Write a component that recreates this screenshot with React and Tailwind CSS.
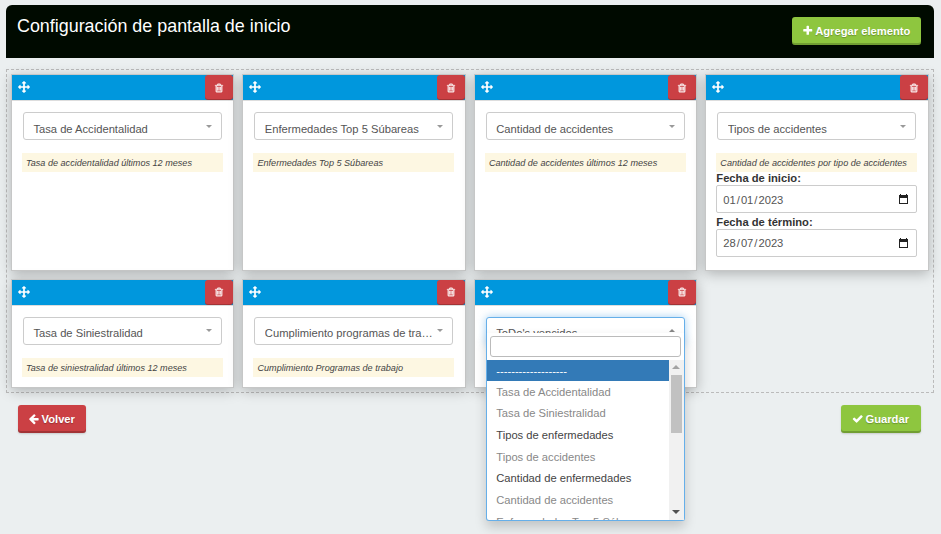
const PATHS = {
  move: 'M1792 896q0 26-19 45l-256 256q-19 19-45 19t-45-19-19-45v-128h-384v384h128q26 0 45 19t19 45-19 45l-256 256q-19 19-45 19t-45-19l-256-256q-19-19-19-45t19-45 45-19h128v-384h-384v128q0 26-19 45t-45 19-45-19l-256-256q-19-19-19-45t19-45l256-256q19-19 45-19t45 19 19 45v128h384v-384h-128q-26 0-45-19t-19-45 19-45l256-256q19-19 45-19t45 19l256 256q19 19 19 45t-19 45-45 19h-128v384h384v-128q0-26 19-45t45-19 45 19l256 256q19 19 19 45z',
  trash: 'M704 736v576q0 14-9 23t-23 9h-64q-14 0-23-9t-9-23v-576q0-14 9-23t23-9h64q14 0 23 9t9 23zm256 0v576q0 14-9 23t-23 9h-64q-14 0-23-9t-9-23v-576q0-14 9-23t23-9h64q14 0 23 9t9 23zm256 0v576q0 14-9 23t-23 9h-64q-14 0-23-9t-9-23v-576q0-14 9-23t23-9h64q14 0 23 9t9 23zm128 724v-948h-896v948q0 22 7 40.5t14.5 27 10.5 8.5h832q3 0 10.5-8.5t14.5-27 7-40.5zm-672-1076h448l-48-117q-7-9-17-11h-317q-10 2-17 11zm928 32v64q0 14-9 23t-23 9h-96v948q0 83-47 143.5t-113 60.5h-832q-66 0-113-58.5t-47-141.5v-952h-96q-14 0-23-9t-9-23v-64q0-14 9-23t23-9h309l70-167q15-37 54-63t79-26h320q40 0 79 26t54 63l70 167h309q14 0 23 9t9 23z',
  plus: 'M1600 736v192q0 40-28 68t-68 28h-416v416q0 40-28 68t-68 28h-192q-40 0-68-28t-28-68v-416h-416q-40 0-68-28t-28-68v-192q0-40 28-68t68-28h416v-416q0-40 28-68t68-28h192q40 0 68 28t28 68v416h416q40 0 68 28t28 68z',
  check: 'M1671 566q0 40-28 68l-724 724-136 136q-28 28-68 28t-68-28l-136-136-362-362q-28-28-28-68t28-68l136-136q28-28 68-28t68 28l294 295 656-657q28-28 68-28t68 28l136 136q28 28 28 68z',
  left: 'M1664 896v128q0 53-32.5 90.5t-84.5 37.5h-704l293 294q38 36 38 90t-38 90l-75 76q-37 37-90 37-52 0-91-37l-651-652q-37-37-37-90 0-52 37-91l651-650q38-38 91-38 52 0 90 38l75 74q38 38 38 91t-38 91l-293 293h704q52 0 84.5 37.5t32.5 90.5z',
};

function Icon({ name, className }) {
  return (
    <svg viewBox="0 0 1792 1792" fill="currentColor" className={className} aria-hidden="true">
      <path d={PATHS[name]} />
    </svg>
  );
}

function Button({ icon, color, className, children }) {
  const tone = color === 'red' ? 'bg-[#cb4044]' : 'bg-[#8ec63f]';
  return (
    <button
      className={`flex h-7 items-center justify-center gap-[2px] rounded-[3px] pr-px text-[11.2px] font-bold text-white shadow-[inset_0_-2px_0_rgba(0,0,0,0.2),0_1px_2px_rgba(0,0,0,0.15)] [text-shadow:0_1px_1px_rgba(0,0,0,0.25)] ${tone} ${className}`}
    >
      <Icon name={icon} className="size-[11.5px]" />
      <span>{children}</span>
    </button>
  );
}

function CalendarIcon() {
  return (
    <svg viewBox="0 0 9 10" className="h-[10px] w-[9px]" aria-hidden="true">
      <path d="M0 1h9v9H0zM1 4v5h7V4z" fill="#222" fillRule="evenodd" />
      <path d="M1 0h1v1H1zM7 0h1v1H7z" fill="#222" />
    </svg>
  );
}

function DateField({ label, value }) {
  return (
    <div className="flex flex-col">
      <label className="h-[13px] text-[11.2px] leading-[13px] font-bold text-[#333]">{label}</label>
      <div className="flex h-7 items-center justify-between rounded-[2px] border border-[#ccc] bg-white pr-[8px] pl-[6px] text-[11.2px] text-[#555]">
        <span className="flex gap-px pt-[2px]">
          {value.split('/').map((part, i) => (
            <span key={i} className="flex gap-px">
              {i > 0 && <span>/</span>}
              <span>{part}</span>
            </span>
          ))}
        </span>
        <CalendarIcon />
      </div>
    </div>
  );
}

const OPTIONS = [
  ['Tasa de Accidentalidad', true],
  ['Tasa de Siniestralidad', true],
  ['Tipos de enfermedades', false],
  ['Tipos de accidentes', true],
  ['Cantidad de enfermedades', false],
  ['Cantidad de accidentes', true],
  ['Enfermedades Top 5 Súbareas', true],
];

function Dropdown() {
  return (
    <div className="absolute top-[15px] -left-px z-10 flex h-[188px] w-[199px] flex-col rounded-b-[3px] border border-t-0 border-[#66afe9] bg-white shadow-[0_6px_12px_rgba(0,0,0,0.18)]">
      <div className="px-[3px] pt-[3px] pb-[3px]">
        <div className="h-[21px] rounded-[3px] border border-[#bbb] bg-white" />
      </div>
      <div className="flex min-h-0 flex-1">
        <div className="flex-1 overflow-hidden text-[11.2px]">
          <div className="h-[21px] bg-[#337ab7] pl-[9.4px] leading-[23px] text-white">-------------------</div>
          {OPTIONS.map(([label, disabled]) => (
            <div
              key={label}
              className={`h-[21.7px] truncate pl-[9.4px] leading-[22px] ${disabled ? 'text-[#888]' : 'text-[#444]'}`}
            >
              {label}
            </div>
          ))}
        </div>
        <div className="flex w-[15px] flex-col items-center justify-between bg-[#f1f1f1]">
          <div className="flex flex-col items-center">
            <div className="flex h-[15px] items-center">
              <div className="border-x-[4px] border-b-[4px] border-x-transparent border-b-[#a3a3a3]" />
            </div>
            <div className="h-[58px] w-[11px] bg-[#c1c1c1]" />
          </div>
          <div className="flex h-[16px] items-center">
            <div className="border-x-[4px] border-t-[4px] border-x-transparent border-t-[#505050]" />
          </div>
        </div>
      </div>
    </div>
  );
}

function Select({ value, open }) {
  return (
    <div
      className={`relative mx-px flex h-7 w-[199px] items-center justify-between rounded-[3px] border bg-white pr-[9px] pl-[9.4px] text-[11.2px] text-[#555] ${
        open ? 'border-[#66afe9] shadow-[0_0_8px_rgba(102,175,233,0.6)]' : 'border-[#ccc]'
      }`}
    >
      <span className="w-[170px] truncate pt-[6px]">{value}</span>
      {open ? (
        <div className="border-x-[3px] border-b-[3px] border-x-transparent border-b-[#888]" />
      ) : (
        <div className="border-x-[3px] border-t-[3px] border-x-transparent border-t-[#999]" />
      )}
      {open && <Dropdown />}
    </div>
  );
}

function Card({ value, note, dates, open }) {
  return (
    <section className="flex flex-col border border-[#c6c7c7] bg-white shadow-[0_3px_12px_rgba(0,0,0,0.25)]">
      <header className="flex h-[25px] shrink-0 items-center justify-between bg-[#0097dd] pl-[6px] text-white">
        <Icon name="move" className="mb-px size-3" />
        <button className="flex h-[25px] w-7 items-center justify-center rounded-[3px] bg-[#cb4044] shadow-[inset_0_-1px_0_rgba(0,0,0,0.2)]">
          <Icon name="trash" className="size-[10px] stroke-white [stroke-width:60px]" />
        </button>
      </header>
      <div className="flex flex-col border-t border-[#ddd] px-[10px] pt-[11px]">
        <Select value={value} open={open} />
        {note && (
          <p className="mt-[13px] h-[19px] w-[201px] truncate bg-[#fdf7e2] pl-1 text-[9.1px] leading-[20px] text-[#444] italic">
            {note}
          </p>
        )}
        {dates && (
          <div className="flex w-[201px] flex-col gap-[2.6px]">
            <DateField label="Fecha de inicio:" value="01/01/2023" />
            <DateField label="Fecha de término:" value="28/07/2023" />
          </div>
        )}
      </div>
    </section>
  );
}

const CARDS = [
  { value: 'Tasa de Accidentalidad', note: 'Tasa de accidentalidad últimos 12 meses' },
  { value: 'Enfermedades Top 5 Súbareas', note: 'Enfermedades Top 5 Súbareas' },
  { value: 'Cantidad de accidentes', note: 'Cantidad de accidentes últimos 12 meses' },
  { value: 'Tipos de accidentes', note: 'Cantidad de accidentes por tipo de accidentes', dates: true },
  { value: 'Tasa de Siniestralidad', note: 'Tasa de siniestralidad últimos 12 meses' },
  { value: 'Cumplimiento programas de trabajo', note: 'Cumplimiento Programas de trabajo' },
  { value: "ToDo's vencidos", open: true },
];

export default function App() {
  return (
    <main className="h-[534px] w-[941px] overflow-hidden bg-[#ebeff0] px-[6px] pt-[5px] font-['Liberation_Sans',Arial,sans-serif]">
      <div className="flex h-[53px] w-[928px] items-start justify-between rounded-t-[6px] bg-[#000a00] pr-[13px] pl-[11px]">
        <h1 className="pt-[8px] text-[17.9px] leading-[26px] text-white">Configuración de pantalla de inicio</h1>
        <Button icon="plus" color="green" className="mt-3 w-[129px]">
          Agregar elemento
        </Button>
      </div>
      <div className="mt-[11px] grid h-[324px] w-[928px] grid-cols-[repeat(4,223.4px)] grid-rows-[196.6px_109.4px] gap-x-[8.05px] gap-y-2 border border-dashed border-[#bbb] pt-1 pl-1">
        {CARDS.map((card) => (
          <Card key={card.value} {...card} />
        ))}
      </div>
      <div className="mt-3 flex w-[915px] justify-between pl-3">
        <Button icon="left" color="red" className="w-[68px]">
          Volver
        </Button>
        <Button icon="check" color="green" className="w-20">
          Guardar
        </Button>
      </div>
    </main>
  );
}
